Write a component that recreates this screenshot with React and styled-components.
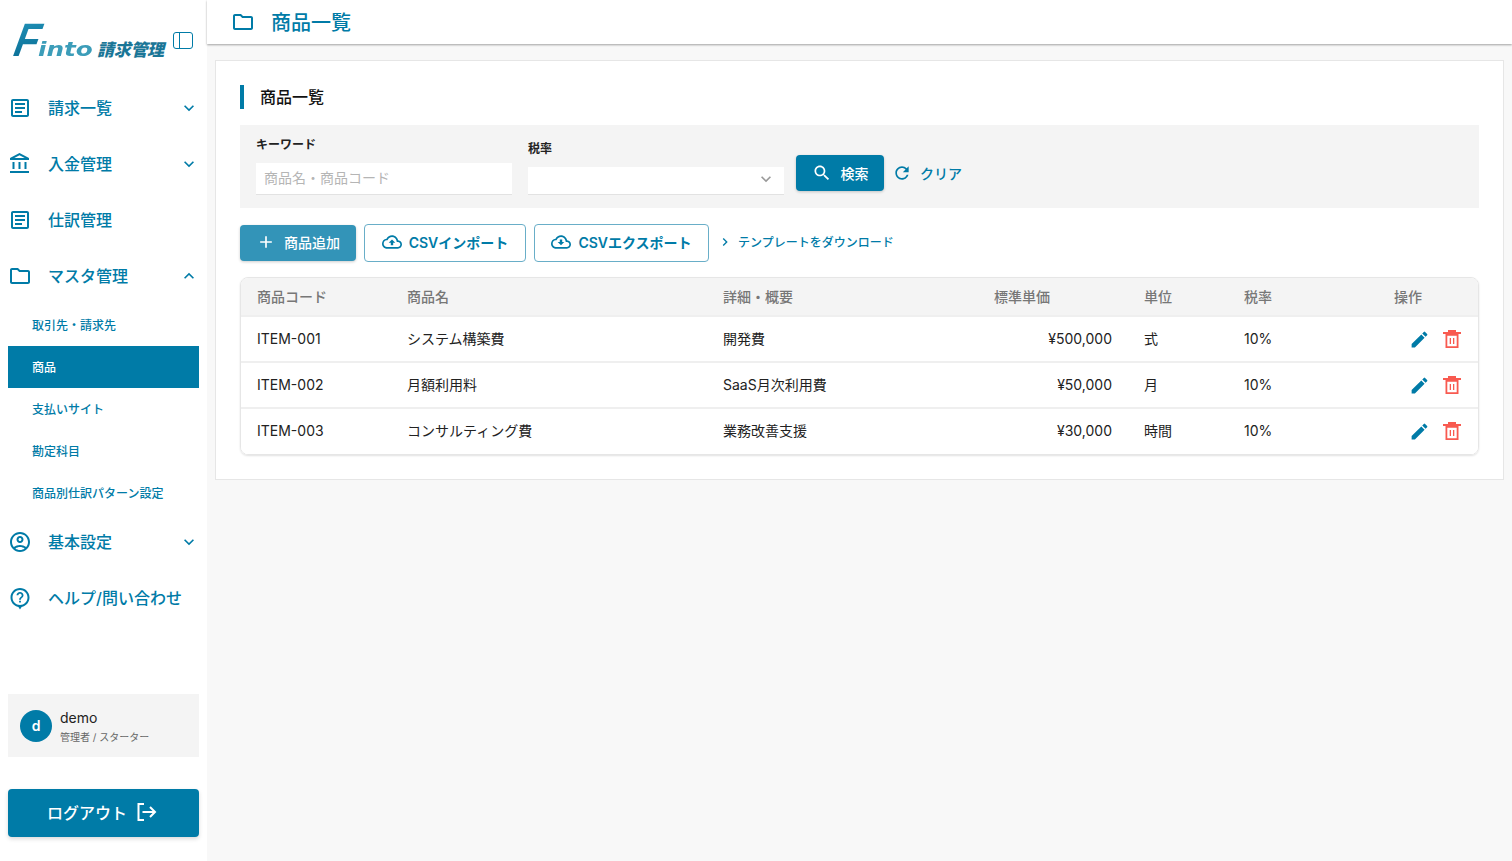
import styled, { createGlobalStyle } from 'styled-components';

const PRIMARY = '#007ba7';
const FONT = `Inter, "Noto Sans CJK JP", sans-serif`;

const GlobalStyle = createGlobalStyle`
  * { box-sizing: border-box; }
  html, body { margin: 0; height: 100%; }
  body {
    font-family: ${FONT};
    background: #f8f8f8;
    color: #222;
  }
`;

const PATHS = {
  article:
    'M19 5v14H5V5h14m0-2H5c-1.1 0-2 .9-2 2v14c0 1.1.9 2 2 2h14c1.1 0 2-.9 2-2V5c0-1.1-.9-2-2-2z M14 17H7v-2h7v2zm3-4H7v-2h10v2zm0-4H7V7h10v2z',
  bank: 'M6.5 10h-2v7h2v-7zm6 0h-2v7h2v-7zm8.5 9H2v2h19v-2zm-2.5-9h-2v7h2v-7zm-7-6.74L16.71 6H6.29l5.21-2.74m0-2.26L2 6v2h19V6l-9.5-5z',
  folder:
    'M9.17 6l2 2H20v10H4V6h5.17M10 4H4c-1.1 0-1.99.9-1.99 2L2 18c0 1.1.9 2 2 2h16c1.1 0 2-.9 2-2V8c0-1.1-.9-2-2-2h-8l-2-2z',
  more: 'M16.59 8.59 12 13.17 7.41 8.59 6 10l6 6 6-6z',
  less: 'm12 8-6 6 1.41 1.41L12 10.83l4.59 4.58L18 14z',
  account:
    'M12 2C6.48 2 2 6.48 2 12s4.48 10 10 10 10-4.48 10-10S17.52 2 12 2zM7.35 18.5C8.66 17.56 10.26 17 12 17s3.34.56 4.65 1.5c-1.31.94-2.91 1.5-4.65 1.5s-3.34-.56-4.65-1.5zm10.79-1.38C16.45 15.8 14.32 15 12 15s-4.45.8-6.14 2.12C4.7 15.73 4 13.95 4 12c0-4.42 3.58-8 8-8s8 3.58 8 8c0 1.95-.7 3.73-1.86 5.12z M12 6c-1.93 0-3.5 1.57-3.5 3.5S10.07 13 12 13s3.5-1.57 3.5-3.5S13.93 6 12 6zm0 5c-.83 0-1.5-.67-1.5-1.5S11.17 8 12 8s1.5.67 1.5 1.5S12.83 11 12 11z',
  help: 'M12 2C6.75 2 2.5 6.25 2.5 11.5c0 4.7 3.4 8.6 7.9 9.4L12 23.5l1.6-2.6c4.5-.8 7.9-4.7 7.9-9.4C21.5 6.25 17.25 2 12 2z M12 4c-4.14 0-7.5 3.36-7.5 7.5s3.36 7.5 7.5 7.5 7.5-3.36 7.5-7.5S16.14 4 12 4z M11.1 14.8h1.8v1.8h-1.8z M12 6c-1.9 0-3.4 1.4-3.5 3.3h1.8c.1-.9.8-1.5 1.7-1.5 1 0 1.7.7 1.7 1.6 0 1.6-2.6 1.5-2.6 4.3h1.8c0-1.9 2.6-2.3 2.6-4.3C15.5 7.5 13.9 6 12 6z',
  search:
    'M15.5 14h-.79l-.28-.27C15.41 12.59 16 11.11 16 9.5 16 5.91 13.09 3 9.5 3S3 5.91 3 9.5 5.91 16 9.5 16c1.61 0 3.09-.59 4.23-1.57l.27.28v.79l5 4.99L20.49 19l-4.99-5zm-6 0C7.01 14 5 11.99 5 9.5S7.01 5 9.5 5 14 7.01 14 9.5 11.99 14 9.5 14z',
  refresh:
    'M17.65 6.35C16.2 4.9 14.21 4 12 4c-4.42 0-7.99 3.58-7.99 8s3.57 8 7.99 8c3.73 0 6.84-2.55 7.73-6h-2.08c-.82 2.33-3.04 4-5.65 4-3.31 0-6-2.69-6-6s2.69-6 6-6c1.66 0 3.14.69 4.22 1.78L13 11h7V4l-2.35 2.35z',
  add: 'M19 13h-6v6h-2v-6H5v-2h6V5h2v6h6v2z',
  upload:
    'M19.35 10.04C18.67 6.59 15.64 4 12 4 9.11 4 6.6 5.64 5.35 8.04 2.34 8.36 0 10.91 0 14c0 3.31 2.69 6 6 6h13c2.76 0 5-2.24 5-5 0-2.64-2.05-4.78-4.65-4.96zM19 18H6c-2.21 0-4-1.79-4-4 0-2.05 1.53-3.76 3.56-3.97l1.07-.11.5-.95C8.08 7.14 9.94 6 12 6c2.62 0 4.88 1.86 5.39 4.43l.3 1.5 1.53.11c1.56.1 2.78 1.41 2.78 2.96 0 1.65-1.35 3-3 3zM8 13h2.55v3h2.9v-3H16l-4-4z',
  download:
    'M19.35 10.04C18.67 6.59 15.64 4 12 4 9.11 4 6.6 5.64 5.35 8.04 2.34 8.36 0 10.91 0 14c0 3.31 2.69 6 6 6h13c2.76 0 5-2.24 5-5 0-2.64-2.05-4.78-4.65-4.96zM19 18H6c-2.21 0-4-1.79-4-4 0-2.05 1.53-3.76 3.56-3.97l1.07-.11.5-.95C8.08 7.14 9.94 6 12 6c2.62 0 4.88 1.86 5.39 4.43l.3 1.5 1.53.11c1.56.1 2.78 1.41 2.78 2.96 0 1.65-1.35 3-3 3zM13.45 9h-2.9v3H8l4 4 4-4h-2.55z',
  chevron: 'M10 6 8.59 7.41 13.17 12l-4.58 4.59L10 18l6-6z',
  edit: 'M3 17.25V21h3.75L17.81 9.94l-3.75-3.75L3 17.25zM20.71 7.04c.39-.39.39-1.02 0-1.41l-2.34-2.34a.9959.9959 0 0 0-1.41 0l-1.83 1.83 3.75 3.75 1.83-1.83z',
  trash:
    'M8 3h8v2h5v2H3V5h5z M5.5 7h13v14h-13z M7.3 8.8V19.2h9.4V8.8z M9.7 11h1.3v6H9.7z M13 11h1.3v6H13z',
};

const Icon = ({ name, size = 24, color = 'currentColor' }) => (
  <svg width={size} height={size} viewBox="0 0 24 24" fill={color} style={{ flexShrink: 0 }}>
    <path fillRule="evenodd" d={PATHS[name]} />
  </svg>
);

const Page = styled.div`
  display: flex;
  min-height: 861px;
`;

const Sidebar = styled.aside`
  width: 207px;
  height: 861px;
  flex-shrink: 0;
  background: #fff;
  padding: 0 8px 24px;
  display: flex;
  flex-direction: column;
`;

const LogoRow = styled.div`
  height: 80px;
  display: flex;
  align-items: flex-start;
  justify-content: space-between;
  margin-right: 6px;
`;

const Logo = styled.div`
  display: flex;
  align-items: baseline;
  margin: 17px 0 0 0;
  white-space: nowrap;
  height: 46px;
`;

const LogoF = styled.span`
  display: inline-block;
  width: 29px;
  font-family: 'Liberation Sans', sans-serif;
  font-weight: 700;
  font-size: 47px;
  line-height: 46px;
  transform: skewX(-20deg) scaleX(0.82);
  transform-origin: left bottom;
  background: linear-gradient(165deg, #1f8fb5 10%, #0a6f96 85%);
  -webkit-background-clip: text;
  background-clip: text;
  color: transparent;
`;

const LogoInto = styled.span`
  display: inline-block;
  width: 56px;
  margin-left: 1px;
  font-family: 'DejaVu Sans', sans-serif;
  font-weight: 700;
  font-style: italic;
  font-size: 19px;
  transform: scaleX(1.3);
  transform-origin: left center;
  color: #3c9db9;
`;

const LogoSub = styled.span`
  font-weight: 900;
  font-style: italic;
  font-size: 17px;
  margin-left: 3px;
  letter-spacing: -0.3px;
  color: #1a7697;
`;

const ToggleButton = styled.div`
  width: 20px;
  height: 17px;
  margin-top: 32px;
  border: 1.5px solid ${PRIMARY};
  border-radius: 3px;
  position: relative;
  display: flex;
  &::before {
    content: '';
    width: 5px;
    border-right: 1.5px solid ${PRIMARY};
  }
`;

const NavItem = styled.div`
  height: 56px;
  display: flex;
  align-items: center;
  color: ${PRIMARY};
`;

const NavIconBox = styled.span`
  width: 24px;
  display: flex;
  margin-right: 16px;
`;

const NavLabel = styled.span`
  flex: 1;
  font-size: 16px;
  font-weight: 500;
  padding-bottom: 2px;
  white-space: nowrap;
`;

const Chevron = styled.span`
  display: flex;
`;

const SubList = styled.div`
  display: flex;
  flex-direction: column;
`;

const SubItem = styled.div`
  height: 42px;
  display: flex;
  align-items: center;
  padding: 0 0 2px 24px;
  font-size: 12px;
  font-weight: 500;
  white-space: nowrap;
  color: ${({ $active }) => ($active ? '#fff' : PRIMARY)};
  background: ${({ $active }) => ($active ? PRIMARY : 'transparent')};
`;

const UserCard = styled.div`
  margin-top: auto;
  height: 63px;
  background: #f4f4f4;
  display: flex;
  align-items: center;
  padding-left: 12px;
  gap: 8px;
`;

const Avatar = styled.div`
  width: 32px;
  height: 32px;
  border-radius: 50%;
  background: ${PRIMARY};
  color: #fff;
  font-size: 14px;
  font-weight: 600;
  display: flex;
  align-items: center;
  justify-content: center;
`;

const UserText = styled.div`
  display: flex;
  flex-direction: column;
  gap: 3px;
  padding-top: 2px;
`;

const UserName = styled.span`
  font-size: 14px;
  line-height: 18px;
  color: #222;
`;

const UserRole = styled.span`
  font-size: 10px;
  line-height: 14px;
  color: #666;
`;

const LogoutButton = styled.button`
  margin-top: 32px;
  height: 48px;
  border: 0;
  border-radius: 4px;
  background: ${PRIMARY};
  color: #fff;
  font-family: ${FONT};
  font-size: 16px;
  font-weight: 500;
  display: flex;
  align-items: center;
  justify-content: center;
  gap: 7px;
  padding: 0 2px 2px 0;
  box-shadow: 0 2px 4px rgba(0, 0, 0, 0.15);
`;

const Main = styled.main`
  flex: 1;
  min-width: 0;
  display: flex;
  flex-direction: column;
`;

const TopBar = styled.header`
  height: 44px;
  background: #fff;
  box-shadow: 0 1px 2px rgba(0, 0, 0, 0.35);
  display: flex;
  align-items: center;
  padding: 0 0 0 24px;
  gap: 16px;
  color: ${PRIMARY};
`;

const TopTitle = styled.h1`
  margin: 0;
  padding-bottom: 2px;
  font-size: 20px;
  font-weight: 500;
`;

const Content = styled.div`
  padding: 16px 8px 0;
`;

const Panel = styled.section`
  background: #fff;
  border: 1px solid #e6e6e6;
  padding: 24px;
`;

const SectionTitle = styled.h2`
  margin: 0 0 16px;
  height: 24px;
  border-left: 4px solid ${PRIMARY};
  padding-left: 16px;
  font-size: 16px;
  font-weight: 500;
  line-height: 24px;
  color: #111;
`;

const FilterBox = styled.div`
  height: 83px;
  background: #f4f4f4;
  padding: 0 16px 13px;
  display: flex;
  align-items: flex-end;
`;

const Field = styled.div`
  width: 256px;
  margin-right: 16px;
  display: flex;
  flex-direction: column;
`;

const FieldLabel = styled.label`
  font-size: 12px;
  font-weight: 600;
  line-height: 16px;
  margin-bottom: 10px;
  color: #222;
`;

const TextInput = styled.div`
  height: ${({ $h }) => $h}px;
  background: #fff;
  border-bottom: 1px solid #e2e2e2;
  padding: 0 8px 3px;
  display: flex;
  align-items: center;
  justify-content: space-between;
  font-size: 14px;
  color: #b5b5b5;
`;

const SearchButton = styled.button`
  width: 88px;
  height: 36px;
  margin: 0 0 4px -4px;
  border: 0;
  border-radius: 4px;
  background: ${PRIMARY};
  color: #fff;
  font-family: ${FONT};
  font-size: 14px;
  font-weight: 500;
  display: flex;
  align-items: center;
  justify-content: center;
  gap: 9px;
  box-shadow: 0 1px 3px rgba(0, 0, 0, 0.2);
`;

const ClearButton = styled.div`
  margin: 0 0 12px 8px;
  display: flex;
  align-items: center;
  gap: 8px;
  font-size: 14px;
  font-weight: 500;
  color: ${PRIMARY};
`;

const ActionRow = styled.div`
  display: flex;
  align-items: center;
  margin: 16px 0;
  height: 37px;
  gap: 8px;
`;

const AddButton = styled.button`
  width: 116px;
  height: 36px;
  border: 0;
  border-radius: 4px;
  background: #3394b8;
  color: #fff;
  font-family: ${FONT};
  font-size: 14px;
  font-weight: 500;
  display: flex;
  align-items: center;
  justify-content: center;
  gap: 8px;
  padding: 0 0 2px;
  box-shadow: 0 1px 3px rgba(0, 0, 0, 0.2);
`;

const OutlineButton = styled.button`
  width: ${({ $w }) => $w}px;
  height: 38px;
  background: #fff;
  border: 1px solid #69aec8;
  border-radius: 4px;
  color: ${PRIMARY};
  font-family: ${FONT};
  font-size: 14px;
  font-weight: 600;
  display: flex;
  align-items: center;
  justify-content: center;
  gap: 7px;
  padding: 0 0 2px;
`;

const TemplateLink = styled.div`
  padding-bottom: 2px;
  display: flex;
  align-items: center;
  gap: 5px;
  font-size: 12px;
  font-weight: 500;
  color: ${PRIMARY};
`;

const Table = styled.div`
  border: 1px solid #e6e6e6;
  border-radius: 8px;
  overflow: hidden;
  box-shadow: 0 1px 2px rgba(0, 0, 0, 0.12);
`;

const Row = styled.div`
  display: grid;
  grid-template-columns: 150px 316px 271px 150px 100px 150px 100px;
  align-items: center;
  height: ${({ $head, $last }) => ($head ? '39px' : $last ? '45px' : '46px')};
  background: ${({ $head }) => ($head ? '#f4f4f4' : '#fff')};
  border-bottom: ${({ $last }) => ($last ? '1px solid #fff' : '2px solid #efefef')};
`;

const HeadCell = styled.div`
  padding: 0 0 2px 16px;
  font-size: 14px;
  font-weight: 500;
  color: #777;
`;

const Cell = styled.div`
  padding: 0 16px 2px;
  font-size: 14px;
  color: #222;
  text-align: ${({ $right }) => ($right ? 'right' : 'left')};
`;

const Ops = styled.div`
  display: flex;
  align-items: center;
  justify-content: flex-end;
  gap: 10px;
  padding-right: 14px;
  color: ${PRIMARY};
`;

const NAV_TOP = [
  { icon: 'article', label: '請求一覧', caret: 'more' },
  { icon: 'bank', label: '入金管理', caret: 'more' },
  { icon: 'article', label: '仕訳管理' },
  { icon: 'folder', label: 'マスタ管理', caret: 'less' },
];

const NAV_SUB = ['取引先・請求先', '商品', '支払いサイト', '勘定科目', '商品別仕訳パターン設定'];

const NAV_BOTTOM = [
  { icon: 'account', label: '基本設定', caret: 'more' },
  { icon: 'help', label: 'ヘルプ/問い合わせ' },
];

const ITEMS = [
  { code: 'ITEM-001', name: 'システム構築費', detail: '開発費', price: '¥500,000', unit: '式', tax: '10%' },
  { code: 'ITEM-002', name: '月額利用料', detail: 'SaaS月次利用費', price: '¥50,000', unit: '月', tax: '10%' },
  { code: 'ITEM-003', name: 'コンサルティング費', detail: '業務改善支援', price: '¥30,000', unit: '時間', tax: '10%' },
];

function NavEntry({ icon, label, caret }) {
  return (
    <NavItem>
      <NavIconBox>
        <Icon name={icon} />
      </NavIconBox>
      <NavLabel>{label}</NavLabel>
      {caret && (
        <Chevron>
          <Icon name={caret} size={20} />
        </Chevron>
      )}
    </NavItem>
  );
}

export default function App() {
  return (
    <Page>
      <GlobalStyle />
      <Sidebar>
        <LogoRow>
          <Logo>
            <LogoF>F</LogoF>
            <LogoInto>into</LogoInto>
            <LogoSub>請求管理</LogoSub>
          </Logo>
          <ToggleButton />
        </LogoRow>
        {NAV_TOP.map((item) => (
          <NavEntry key={item.label} {...item} />
        ))}
        <SubList>
          {NAV_SUB.map((label) => (
            <SubItem key={label} $active={label === '商品'}>
              {label}
            </SubItem>
          ))}
        </SubList>
        {NAV_BOTTOM.map((item) => (
          <NavEntry key={item.label} {...item} />
        ))}
        <UserCard>
          <Avatar>d</Avatar>
          <UserText>
            <UserName>demo</UserName>
            <UserRole>管理者 / スターター</UserRole>
          </UserText>
        </UserCard>
        <LogoutButton>
          ログアウト
          <svg width="24" height="24" viewBox="0 0 24 24" fill="none" stroke="#fff" strokeWidth="2">
            <path d="M10 4H4.5v16H10M8.5 12H21M16 7l5 5-5 5" />
          </svg>
        </LogoutButton>
      </Sidebar>
      <Main>
        <TopBar>
          <Icon name="folder" />
          <TopTitle>商品一覧</TopTitle>
        </TopBar>
        <Content>
          <Panel>
            <SectionTitle>商品一覧</SectionTitle>
            <FilterBox>
              <Field>
                <FieldLabel>キーワード</FieldLabel>
                <TextInput $h={32}>商品名・商品コード</TextInput>
              </Field>
              <Field>
                <FieldLabel>税率</FieldLabel>
                <TextInput $h={28}>
                  <span />
                  <Icon name="more" size={20} color="#999" />
                </TextInput>
              </Field>
              <SearchButton>
                <Icon name="search" size={20} />
                検索
              </SearchButton>
              <ClearButton>
                <Icon name="refresh" size={20} />
                クリア
              </ClearButton>
            </FilterBox>
            <ActionRow>
              <AddButton>
                <Icon name="add" size={20} />
                商品追加
              </AddButton>
              <OutlineButton $w={162}>
                <Icon name="upload" size={20} />
                CSVインポート
              </OutlineButton>
              <OutlineButton $w={175}>
                <Icon name="download" size={20} />
                CSVエクスポート
              </OutlineButton>
              <TemplateLink>
                <Icon name="chevron" size={16} />
                テンプレートをダウンロード
              </TemplateLink>
            </ActionRow>
            <Table>
              <Row $head>
                <HeadCell>商品コード</HeadCell>
                <HeadCell>商品名</HeadCell>
                <HeadCell>詳細・概要</HeadCell>
                <HeadCell>標準単価</HeadCell>
                <HeadCell>単位</HeadCell>
                <HeadCell>税率</HeadCell>
                <HeadCell>操作</HeadCell>
              </Row>
              {ITEMS.map((item, i) => (
                <Row key={item.code} $last={i === ITEMS.length - 1}>
                  <Cell>{item.code}</Cell>
                  <Cell>{item.name}</Cell>
                  <Cell>{item.detail}</Cell>
                  <Cell $right>{item.price}</Cell>
                  <Cell>{item.unit}</Cell>
                  <Cell>{item.tax}</Cell>
                  <Ops>
                    <Icon name="edit" size={21} />
                    <Icon name="trash" color="#f85a50" />
                  </Ops>
                </Row>
              ))}
            </Table>
          </Panel>
        </Content>
      </Main>
    </Page>
  );
}
